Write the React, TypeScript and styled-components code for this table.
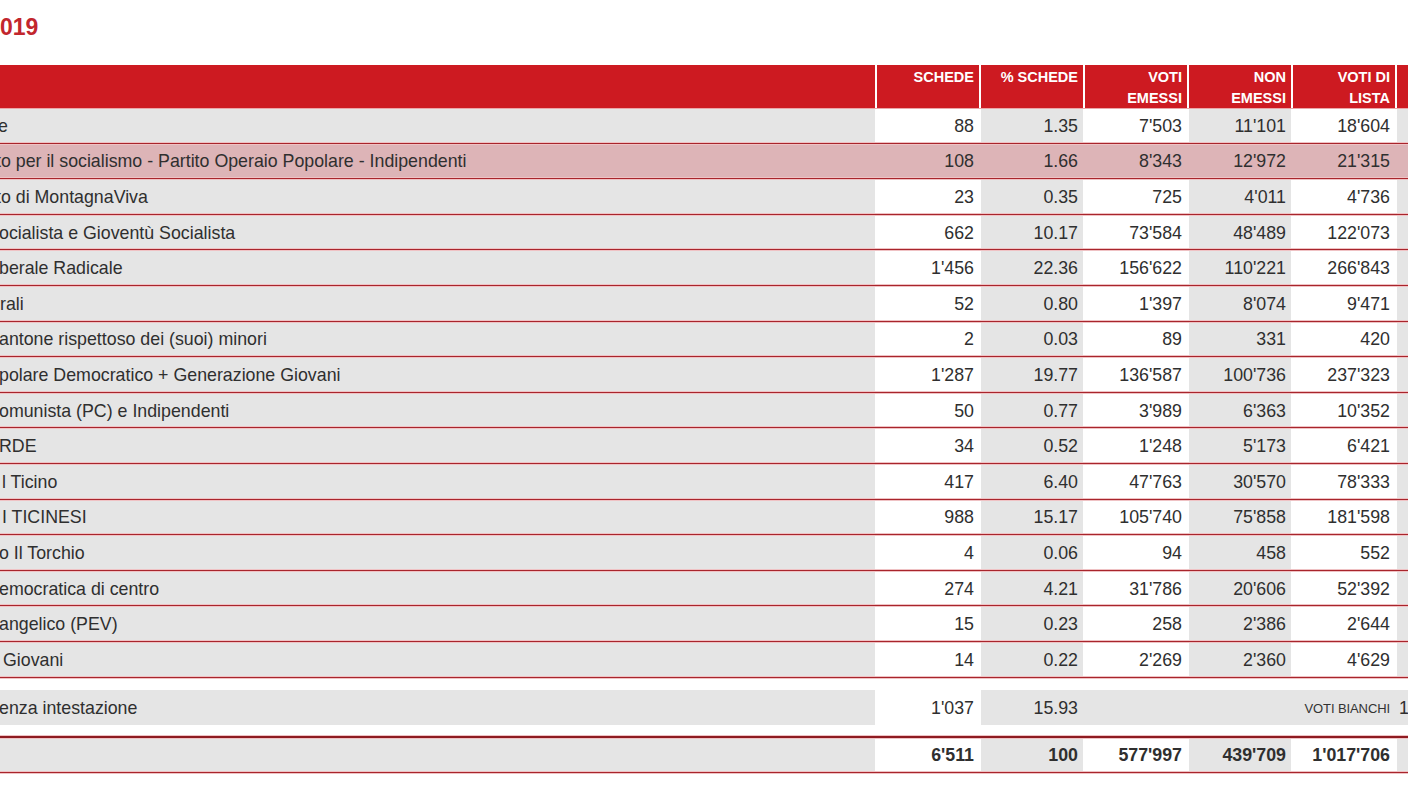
import React from 'react';
import styled, { createGlobalStyle } from 'styled-components';

const GlobalStyle = createGlobalStyle`
  html, body { margin: 0; padding: 0; background: #ffffff; }
  body {
    font-family: "Liberation Sans", Arial, Helvetica, sans-serif;
    overflow: hidden;
  }
`;

type Tone = 'gray' | 'white' | 'pink';

const toneColor: Record<Tone, string> = {
  gray: '#e5e5e5',
  white: '#ffffff',
  pink: '#ddb4b7',
};

const Page = styled.div`
  width: 1408px;
  height: 792px;
  overflow: hidden;
  box-sizing: border-box;
  padding-top: 14px;
`;

const Title = styled.h2`
  margin: 0 0 25px;
  font-size: 23px;
  line-height: 26px;
  font-weight: bold;
  color: #c2262d;
  white-space: nowrap;
`;

const Table = styled.div`
  width: 1501px;
  display: flex;
  flex-direction: column;
`;

const HeaderRow = styled.div`
  display: grid;
  grid-template-columns: 877px repeat(6, 104px);
  height: 44px;
  box-sizing: border-box;
  border-bottom: 1px solid #eba6a9;
`;

const HeadCell = styled.div`
  background: #cd1a21;
  border-right: 2px solid #ffffff;
  color: #ffffff;
  font-weight: bold;
  font-size: 14.5px;
  line-height: 20.5px;
  text-align: right;
  text-transform: uppercase;
  padding: 2px 5px 0 16px;
  box-sizing: border-box;
`;

const sepGradient = `linear-gradient(to bottom,
  transparent calc(100% - 3px),
  #efc2c4 calc(100% - 3px), #efc2c4 calc(100% - 2px),
  #a8252c calc(100% - 2px), #a8252c calc(100% - 1px),
  #efc2c4 calc(100% - 1px))`;

const Row = styled.div<{ $height: number; $sep?: boolean; $gapTop?: number }>`
  display: grid;
  grid-template-columns: 877px repeat(6, 104px);
  height: ${(p) => p.$height}px;
  box-sizing: border-box;
  margin-top: ${(p) => p.$gapTop ?? 0}px;
  padding-bottom: ${(p) => (p.$sep ? 3 : 0)}px;
  background: ${(p) => (p.$sep ? sepGradient : 'transparent')};
`;

const Cell = styled.div<{ $tone: Tone; $gap?: Tone; $bold?: boolean; $span?: number }>`
  background: ${(p) => toneColor[p.$tone]};
  border-right: 2px solid ${(p) => toneColor[p.$gap ?? 'white']};
  grid-column: span ${(p) => p.$span ?? 1};
  display: flex;
  align-items: center;
  justify-content: flex-end;
  padding: 2px 5px 0 0;
  box-sizing: border-box;
  font-size: 17.8px;
  font-weight: ${(p) => (p.$bold ? 'bold' : 'normal')};
  color: #2f2f2f;
  white-space: nowrap;
  overflow: hidden;
`;

const NameCell = styled(Cell)<{ $shift: number }>`
  justify-content: flex-start;
  padding-right: 0;
  padding-left: ${(p) => Math.max(p.$shift, 0)}px;
  & > span {
    margin-left: ${(p) => Math.min(p.$shift, 0)}px;
  }
`;

const EdgeCell = styled(Cell)`
  justify-content: flex-start;
  padding-left: 2px;
  padding-right: 0;
  border-right: none;
`;

const SmallLabel = styled.span`
  font-size: 13px;
  color: #333333;
  letter-spacing: -0.1px;
`;

const Rule = styled.div`
  height: 4px;
  margin-top: 10px;
  background: linear-gradient(to bottom, #efc2c4 0 1px, #8e1b21 1px 3px, #efc2c4 3px 4px);
`;

type DataRow = { name: string; shift: number; v: string[]; pink?: boolean };

const rows: DataRow[] = [
  { name: 'e', shift: -2, v: ['88', '1.35', "7'503", "11'101", "18'604"] },
  {
    name: 'to per il socialismo - Partito Operaio Popolare - Indipendenti',
    shift: -4,
    v: ['108', '1.66', "8'343", "12'972", "21'315"],
    pink: true,
  },
  { name: 'to di MontagnaViva', shift: -4, v: ['23', '0.35', '725', "4'011", "4'736"] },
  { name: 'ocialista e Gioventù Socialista', shift: -1, v: ['662', '10.17', "73'584", "48'489", "122'073"] },
  { name: 'berale Radicale', shift: -1, v: ["1'456", '22.36', "156'622", "110'221", "266'843"] },
  { name: 'rali', shift: 0, v: ['52', '0.80', "1'397", "8'074", "9'471"] },
  { name: 'antone rispettoso dei (suoi) minori', shift: -1, v: ['2', '0.03', '89', '331', '420'] },
  { name: 'polare Democratico + Generazione Giovani', shift: -1, v: ["1'287", '19.77', "136'587", "100'736", "237'323"] },
  { name: 'omunista (PC) e Indipendenti', shift: -1, v: ['50', '0.77', "3'989", "6'363", "10'352"] },
  { name: 'RDE', shift: -1, v: ['34', '0.52', "1'248", "5'173", "6'421"] },
  { name: 'l Ticino', shift: 2, v: ['417', '6.40', "47'763", "30'570", "78'333"] },
  { name: 'I TICINESI', shift: 2, v: ['988', '15.17', "105'740", "75'858", "181'598"] },
  { name: 'o Il Torchio', shift: -1, v: ['4', '0.06', '94', '458', '552'] },
  { name: 'emocratica di centro', shift: -1, v: ['274', '4.21', "31'786", "20'606", "52'392"] },
  { name: 'angelico (PEV)', shift: -1, v: ['15', '0.23', '258', "2'386", "2'644"] },
  { name: 'Giovani', shift: 3, v: ['14', '0.22', "2'269", "2'360", "4'629"] },
];

const colTone: Tone[] = ['white', 'gray', 'white', 'gray', 'white'];

const headers = ['SCHEDE', '% SCHEDE', 'VOTI EMESSI', 'NON EMESSI', 'VOTI DI LISTA'];

export default function App() {
  return (
    <>
      <GlobalStyle />
      <Page>
        <Title>019</Title>
        <Table>
          <HeaderRow>
            <HeadCell />
            {headers.map((h) => (
              <HeadCell key={h}>{h}</HeadCell>
            ))}
            <HeadCell />
          </HeaderRow>

          {rows.map((r) => {
            const t = (tone: Tone): Tone => (r.pink ? 'pink' : tone);
            const g: Tone | undefined = r.pink ? 'pink' : undefined;
            return (
              <Row key={r.name} $height={35.6} $sep>
                <NameCell $tone={t('gray')} $gap={g} $shift={r.shift}>
                  <span>{r.name}</span>
                </NameCell>
                {r.v.map((val, i) => (
                  <Cell key={i} $tone={t(colTone[i])} $gap={g}>
                    {val}
                  </Cell>
                ))}
                <Cell $tone={t('gray')} $gap={g} />
              </Row>
            );
          })}

          <Row $height={35} $gapTop={11}>
            <NameCell $tone="gray" $shift={-1}>
              <span>enza intestazione</span>
            </NameCell>
            <Cell $tone="white">1'037</Cell>
            <Cell $tone="gray" $gap="gray">15.93</Cell>
            <Cell $tone="gray" $gap="gray" $span={3}>
              <SmallLabel>VOTI BIANCHI</SmallLabel>
            </Cell>
            <EdgeCell $tone="gray">1'580</EdgeCell>
          </Row>

          <Rule />

          <Row $height={35.5} $sep>
            <NameCell $tone="gray" $shift={0} />
            <Cell $tone="white" $bold>6'511</Cell>
            <Cell $tone="gray" $bold>100</Cell>
            <Cell $tone="white" $bold>577'997</Cell>
            <Cell $tone="gray" $bold>439'709</Cell>
            <Cell $tone="white" $bold>1'017'706</Cell>
            <Cell $tone="gray" $bold />
          </Row>
        </Table>
      </Page>
    </>
  );
}
